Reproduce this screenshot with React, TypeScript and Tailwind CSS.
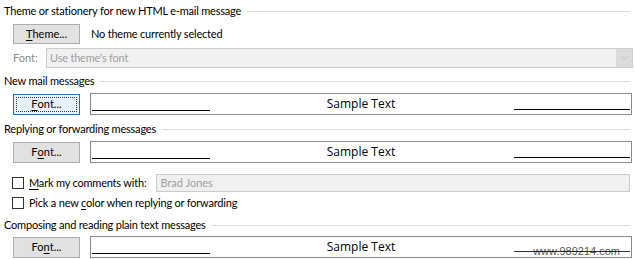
import React from 'react';

const font = { fontFamily: 'Lato, "Open Sans", sans-serif' };

function Heading({ title }: { title: string }) {
  return (
    <div className="flex h-[22px] items-center pl-[4px] pr-[5px]">
      <span className="whitespace-nowrap text-[11px] tracking-[-0.2px] text-black">{title}</span>
      <div className="ml-[6px] h-px flex-1 bg-[#dcdcdc]" />
    </div>
  );
}

function Btn({ pre, u, post, focused }: { pre: string; u: string; post: string; focused?: boolean }) {
  return (
    <button
      className={
        focused
          ? 'flex h-[21px] w-[67px] items-center justify-center border border-[#0078d7] bg-[#e5f1fb] text-[11px] text-black outline-1 outline-dotted outline-offset-[-4px] outline-[#333]'
          : 'flex h-[21px] w-[67px] items-center justify-center border border-[#adadad] bg-[#e1e1e1] text-[11px] text-black'
      }
    >
      {pre}
      <span className="underline underline-offset-2">{u}</span>
      {post}
    </button>
  );
}

function SampleRow({ pre, u, post, focused, mark }: { pre: string; u: string; post: string; focused?: boolean; mark?: boolean }) {
  return (
    <div className="flex h-[22px] items-center pl-[13px] pr-[3px]">
      <Btn pre={pre} u={u} post={post} focused={focused} />
      <div className="relative ml-[10px] flex h-[22px] flex-1 items-center justify-center border border-[#8a8a8a] bg-white">
        <span className="text-[12px] text-black" style={{ fontFamily: '"Open Sans", sans-serif' }}>
          Sample Text
        </span>
        <div className="absolute bottom-[3px] left-[1px] h-px w-[118px] bg-black" />
        {mark ? (
          <>
            <span
              className="absolute bottom-[0px] right-[11px] text-[11px] leading-none text-[#5a5a5a]"
              style={{ fontFamily: '"Liberation Sans", sans-serif' }}
            >
              www.989214.com
            </span>
            <div className="absolute bottom-[5px] right-[1px] h-px w-[116px] bg-black/80" />
          </>
        ) : (
          <div className="absolute bottom-[4px] right-[1px] h-px w-[116px] bg-black" />
        )}
      </div>
    </div>
  );
}

function Check({ children }: { children: React.ReactNode }) {
  return (
    <div className="flex items-center">
      <div className="h-[12px] w-[12px] border border-[#333] bg-white" />
      <span className="ml-[5px] whitespace-nowrap text-[11px] tracking-[-0.2px] text-black">{children}</span>
    </div>
  );
}

export default function App() {
  return (
    <div className="h-[259px] w-[635px] overflow-hidden bg-white" style={font}>
      <Heading title="Theme or stationery for new HTML e-mail message" />

      <div className="mt-[2px] flex h-[20px] items-center pl-[13px]">
        <button className="flex h-[20px] w-[67px] items-center justify-center border border-[#adadad] bg-[#e1e1e1] text-[11px] text-black">
          <span className="underline underline-offset-2">T</span>heme...
        </button>
        <span className="ml-[11px] text-[11px] tracking-[-0.2px] text-black">No theme currently selected</span>
      </div>

      <div className="mt-[4px] flex h-[20px] items-center pl-[13px] pr-[2px]">
        <span className="w-[33px] text-[11px] text-[#8a8a8a]">Font:</span>
        <div className="flex h-[20px] flex-1 items-center border border-[#cccccc] bg-[#f0f0f0]">
          <span className="flex-1 pl-[3px] text-[11px] tracking-[-0.2px] text-[#a0a0a0]">Use theme's font</span>
          <div className="flex h-full w-[16px] items-center justify-center bg-[#dadada]">
            <svg width="7" height="4" viewBox="0 0 7 4">
              <path d="M0.5 0.5 L3.5 3.5 L6.5 0.5" fill="none" stroke="#bfbfbf" strokeWidth="1" />
            </svg>
          </div>
        </div>
      </div>

      <div className="mt-[2px]">
        <Heading title="New mail messages" />
      </div>
      <div className="mt-[1px]">
        <SampleRow pre="" u="F" post="ont..." focused />
      </div>

      <div className="mt-[3px]">
        <Heading title="Replying or forwarding messages" />
      </div>
      <div className="mt-[1px]">
        <SampleRow pre="F" u="o" post="nt..." />
      </div>

      <div className="mt-[11px] flex h-[18px] items-center pl-[12px] pr-[5px]">
        <Check>
          <span className="underline underline-offset-2">M</span>ark my comments with:
        </Check>
        <div className="ml-[10px] flex h-[18px] flex-1 items-center border border-[#cccccc] bg-[#f0f0f0] pl-[3px] text-[11px] text-[#a0a0a0]">
          Brad Jones
        </div>
      </div>

      <div className="mt-[2px] flex h-[18px] items-center pl-[12px]">
        <Check>
          Pick a new <span className="underline underline-offset-2">c</span>olor when replying or forwarding
        </Check>
      </div>

      <div className="mt-[2px]">
        <Heading title="Composing and reading plain text messages" />
      </div>
      <SampleRow pre="Fo" u="n" post="t..." mark />
    </div>
  );
}
